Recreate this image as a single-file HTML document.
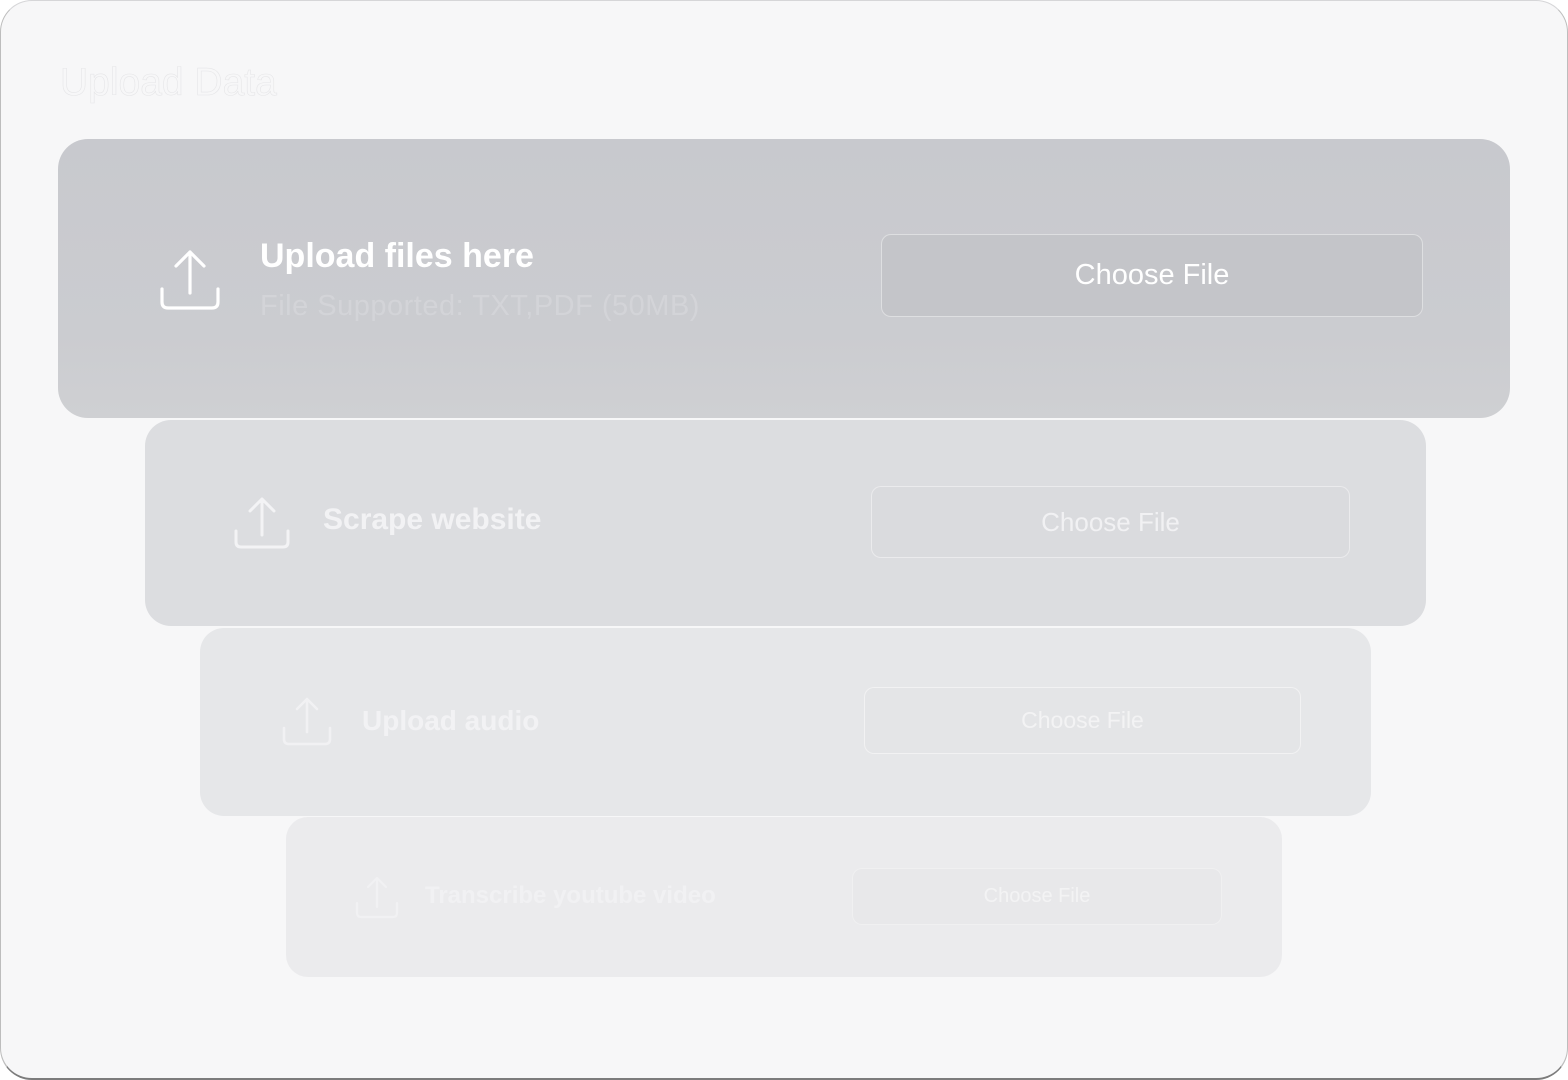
<!DOCTYPE html>
<html><head><style>
*{margin:0;padding:0;box-sizing:border-box}
html,body{width:1568px;height:1080px;background:#fff;overflow:hidden;font-family:"Liberation Sans",sans-serif}
.frame{position:absolute;left:0;top:0;width:1568px;height:1080px;border-radius:32px;background:#f7f7f8;border:1px solid #d6d6d8;border-bottom:2px solid #7c7c7c;border-left-color:#bdbdbd;border-right-color:#bdbdbd}
.t{position:absolute;white-space:nowrap;line-height:1}
.card{position:absolute;border-radius:30px}
.btn{position:absolute;border-radius:10px;border:1px solid rgba(255,255,255,.45);display:flex;align-items:center;justify-content:center;color:#fff}
svg{position:absolute;fill:none;stroke-linecap:round;stroke-linejoin:round}
</style></head><body>
<div class="frame"></div>
<div class="t" style="left:60px;top:63px;font-size:39px;-webkit-text-stroke:0.6px #e6e6e8;color:transparent">Upload Data</div>

<div class="card" style="left:58px;top:139px;width:1452px;height:279px;background:linear-gradient(180deg,#c8c9ce 0%,#cbccd0 70%,#cfd0d3 100%)"></div>
<div class="card" style="left:145px;top:420px;width:1281px;height:206px;background:#dcdde0;border-radius:26px"></div>
<div class="card" style="left:200px;top:628px;width:1171px;height:188px;background:#e6e7e9;border-radius:24px"></div>
<div class="card" style="left:286px;top:817px;width:996px;height:160px;background:#ebebed;border-radius:22px"></div>

<svg style="left:159px;top:249px" width="62" height="62" viewBox="0 0 62 62" stroke="#fff" stroke-width="3.2"><path d="M31 3V44M17 17L31 3L45 17M3 40V53Q3 59 9 59H53Q59 59 59 53V40"/></svg>
<div class="t" style="left:260px;top:239px;font-size:34px;font-weight:bold;color:#fff">Upload files here</div>
<div class="t" style="left:260px;top:292px;font-size:29px;letter-spacing:0.5px;color:#d3d4d8">File Supported: TXT,PDF  (50MB)</div>
<div class="btn" style="left:881px;top:234px;width:542px;height:83px;background:#c4c5c9;font-size:29px">Choose File</div>

<svg style="left:234px;top:496px" width="56" height="54" viewBox="0 0 56 54" stroke="#f3f3f5" stroke-width="3"><path d="M28 3V39M16 15L28 3L40 15M2 35V46Q2 51 7 51H49Q54 51 54 46V35"/></svg>
<div class="t" style="left:323px;top:505px;font-size:30px;font-weight:bold;color:#f2f2f4">Scrape website</div>
<div class="btn" style="left:871px;top:486px;width:479px;height:72px;background:#dadbde;font-size:26px;color:#f1f1f3">Choose File</div>

<svg style="left:282px;top:696px" width="50" height="51" viewBox="0 0 50 51" stroke="#f1f1f3" stroke-width="2.6"><path d="M25 3V36M15 13L25 3L35 13M2 32V43Q2 48 7 48H43Q48 48 48 43V32"/></svg>
<div class="t" style="left:362px;top:707px;font-size:28px;font-weight:bold;color:#f2f2f4">Upload audio</div>
<div class="btn" style="left:864px;top:687px;width:437px;height:67px;background:#e4e5e7;font-size:23px;color:#f3f3f4;border-color:rgba(255,255,255,.5)">Choose File</div>

<svg style="left:355px;top:876px" width="44" height="44" viewBox="0 0 44 44" stroke="#f1f1f3" stroke-width="2.2"><path d="M22 2V31M13 11L22 2L31 11M2 27V37Q2 41 6 41H38Q42 41 42 37V27"/></svg>
<div class="t" style="left:425px;top:884px;font-size:24px;font-weight:bold;color:#f1f1f3">Transcribe youtube video</div>
<div class="btn" style="left:852px;top:868px;width:370px;height:57px;background:#e8e8ea;font-size:20px;color:#f3f3f4;border-color:rgba(255,255,255,.35)">Choose File</div>
</body></html>
